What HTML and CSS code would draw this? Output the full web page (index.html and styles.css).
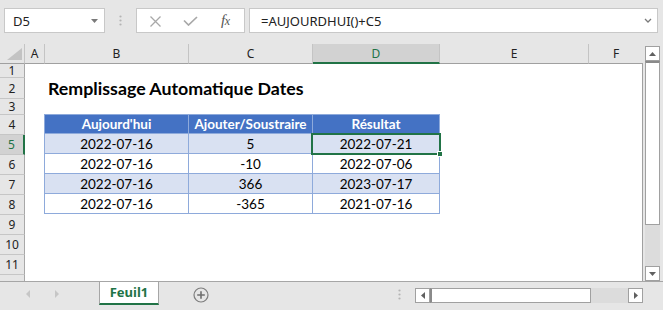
FILE: index.html
```html
<!DOCTYPE html>
<html lang="fr">
<head>
<meta charset="utf-8">
<title>Remplissage Automatique Dates</title>
<link rel="stylesheet" href="styles.css">
</head>
<body>
<div class="app">
  <div class="topbar">
    <div class="namebox">
      <span>D5</span>
      <svg width="7" height="4" viewBox="0 0 7 4"><path d="M0 0H7L3.5 4Z" fill="#7a7a7a"/></svg>
    </div>
    <div class="grip">
      <svg width="3" height="11" viewBox="0 0 3 11"><circle cx="1.5" cy="1.5" r="1.1" fill="#b4b4b4"/><circle cx="1.5" cy="5.5" r="1.1" fill="#b4b4b4"/><circle cx="1.5" cy="9.5" r="1.1" fill="#b4b4b4"/></svg>
    </div>
    <div class="fxbox">
      <svg class="ico-x" width="11" height="11" viewBox="0 0 11 11"><path d="M0.5 0.5L10.5 10.5M10.5 0.5L0.5 10.5" stroke="#a8a8a8" stroke-width="1.3" fill="none"/></svg>
      <svg class="ico-ok" width="15" height="10" viewBox="0 0 15 10"><path d="M1 4.5L5.5 9L14 1" stroke="#a8a8a8" stroke-width="1.7" fill="none"/></svg>
      <span class="fx"><i>f</i><i class="fxx">x</i></span>
    </div>
    <div class="formula">
      <span>=AUJOURDHUI()+C5</span>
      <svg width="8" height="5" viewBox="0 0 8 5"><path d="M1 1L4 4L7 1" stroke="#7a7a7a" stroke-width="1.3" fill="none"/></svg>
    </div>
  </div>

  <div class="main">
    <div class="rowheads">
      <div class="corner"><svg width="15" height="12" viewBox="0 0 15 12"><path d="M15 0V12H0Z" fill="#c3c3c3"/></svg></div>
      <div class="rh r1">1</div>
      <div class="rh r2">2</div>
      <div class="rh r3">3</div>
      <div class="rh">4</div>
      <div class="rh sel">5</div>
      <div class="rh">6</div>
      <div class="rh">7</div>
      <div class="rh">8</div>
      <div class="rh">9</div>
      <div class="rh">10</div>
      <div class="rh">11</div>
      <div class="rh rlast"></div>
    </div>
    <div class="sheetcol">
      <div class="colheads">
        <div class="ch ca">A</div>
        <div class="ch cb">B</div>
        <div class="ch cc">C</div>
        <div class="ch cd sel">D</div>
        <div class="ch ce">E</div>
        <div class="ch cf">F</div>
      </div>
      <div class="canvas">
        <div class="title">Remplissage Automatique Dates</div>
        <div class="table">
          <div class="th">Aujourd'hui</div>
          <div class="th">Ajouter/Soustraire</div>
          <div class="th">Résultat</div>
          <div class="td band">2022-07-16</div>
          <div class="td band">5</div>
          <div class="td band">2022-07-21</div>
          <div class="td">2022-07-16</div>
          <div class="td">-10</div>
          <div class="td">2022-07-06</div>
          <div class="td band">2022-07-16</div>
          <div class="td band">366</div>
          <div class="td band">2023-07-17</div>
          <div class="td">2022-07-16</div>
          <div class="td">-365</div>
          <div class="td">2021-07-16</div>
        </div>
        <div class="selection"><span class="handle"></span></div>
      </div>
    </div>
    <div class="vscroll">
      <div class="sbtn"><svg width="7" height="4" viewBox="0 0 7 4"><path d="M3.5 0L7 4H0Z" fill="#606060"/></svg></div>
      <div class="vthumb"></div>
      <div class="vtrack"></div>
      <div class="sbtn"><svg width="7" height="4" viewBox="0 0 7 4"><path d="M0 0H7L3.5 4Z" fill="#606060"/></svg></div>
    </div>
  </div>

  <div class="tabbar">
    <div class="tabnav">
      <svg width="4" height="8" viewBox="0 0 4 8"><path d="M4 0V8L0 4Z" fill="#c6c6c6"/></svg>
      <svg width="4" height="8" viewBox="0 0 4 8"><path d="M0 0V8L4 4Z" fill="#c6c6c6"/></svg>
    </div>
    <div class="tab">Feuil1</div>
    <div class="addsheet">
      <svg width="16" height="16" viewBox="0 0 16 16"><circle cx="8" cy="8" r="7" stroke="#7d7d7d" stroke-width="1.2" fill="none"/><path d="M8 4.2V11.8M4.2 8H11.8" stroke="#6f6f6f" stroke-width="1.6"/></svg>
    </div>
    <div class="tgrip">
      <svg width="3" height="11" viewBox="0 0 3 11"><circle cx="1.5" cy="1.5" r="1.1" fill="#b4b4b4"/><circle cx="1.5" cy="5.5" r="1.1" fill="#b4b4b4"/><circle cx="1.5" cy="9.5" r="1.1" fill="#b4b4b4"/></svg>
    </div>
    <div class="hscroll">
      <div class="sbtn"><svg width="4" height="7" viewBox="0 0 4 7"><path d="M4 0V7L0 3.5Z" fill="#606060"/></svg></div>
      <div class="hthumb"></div>
      <div class="htrack"></div>
      <div class="sbtn"><svg width="4" height="7" viewBox="0 0 4 7"><path d="M0 0V7L4 3.5Z" fill="#606060"/></svg></div>
    </div>
  </div>
</div>
</body>
</html>
```

FILE: styles.css
```css
* {
  box-sizing: border-box;
  margin: 0;
  padding: 0;
}

html, body {
  width: 663px;
  height: 310px;
  overflow: hidden;
}

body {
  background: #e6e6e6;
  font-family: "Noto Sans", "Open Sans", sans-serif;
  color: #222;
}

.app {
  display: flex;
  flex-direction: column;
  height: 310px;
}

/* ---------- formula bar ---------- */
.topbar {
  height: 44px;
  display: flex;
  align-items: flex-start;
  padding: 8px 0 0 4px;
  flex: none;
}

.namebox,
.fxbox,
.formula {
  height: 25px;
  background: #fff;
  border: 1px solid #c8c8c8;
  display: flex;
  align-items: center;
}

.namebox {
  width: 101px;
  justify-content: space-between;
  padding: 0 6px 0 8px;
  font-size: 13px;
  color: #222;
}

.grip {
  width: 31px;
  height: 25px;
  display: flex;
  align-items: center;
  justify-content: center;
}

.fxbox {
  width: 109px;
  padding-left: 13px;
}

.ico-x {
  margin-top: 1px;
}

.ico-ok {
  margin-left: 22px;
  margin-top: 1px;
}

.fx {
  margin-left: 23px;
  font-family: "Liberation Serif", "DejaVu Serif", serif;
  font-size: 15px;
  color: #555;
  letter-spacing: -0.5px;
}

.fxx {
  font-size: 12px;
}

.formula {
  width: 409px;
  margin-left: 4px;
  justify-content: space-between;
  padding: 0 5px 0 11px;
  font-size: 13px;
  color: #222;
}

/* ---------- grid area ---------- */
.main {
  display: flex;
  height: 237px;
  flex: none;
}

.rowheads {
  width: 25px;
  display: flex;
  flex-direction: column;
  flex: none;
}

.corner {
  height: 20px;
  border-right: 1px solid #c4c4c4;
  border-bottom: 1px solid #a0a0a0;
  display: flex;
  align-items: flex-end;
  justify-content: flex-end;
  padding: 0 2px 3px 0;
}

.rh {
  height: 20px;
  border-right: 1px solid #a8a8a8;
  border-bottom: 1px solid #c6c6c6;
  font-size: 12px;
  line-height: 19px;
  text-align: center;
  color: #222;
}

.rh.r1 { height: 14px; line-height: 13px; }
.rh.r2 { height: 21px; line-height: 21px; }
.rh.r3 { height: 16px; line-height: 15px; }
.rh.rlast { height: 6px; border-bottom: none; }

.rh.sel {
  background: #d2d2d2;
  border-right: 2px solid #217346;
  color: #217346;
}

.sheetcol {
  width: 618px;
  display: flex;
  flex-direction: column;
  flex: none;
}

.colheads {
  height: 20px;
  display: flex;
  flex: none;
}

.ch {
  height: 20px;
  border-right: 1px solid #c4c4c4;
  border-bottom: 1px solid #a0a0a0;
  font-size: 12px;
  line-height: 19px;
  text-align: center;
  color: #222;
  flex: none;
}

.ca { width: 20px; }
.cb { width: 144px; }
.cc { width: 124px; }
.cd { width: 127px; }
.ce { width: 149px; }
.cf { width: 54px; border-right: none; }

.ch.sel {
  background: #d2d2d2;
  border-bottom: 2px solid #217346;
  color: #217346;
}

.canvas {
  flex: 1;
  background: #fff;
  border-right: 1px solid #a0a0a0;
  display: grid;
  grid-template-columns: 20px 144px 124px 127px 149px 54px;
  grid-template-rows: 14px 21px 16px repeat(8, 20px) 6px;
}

.title {
  grid-column: 2 / 6;
  grid-row: 2;
  font-family: "Lato", "Noto Sans", sans-serif;
  font-weight: 700;
  font-size: 17.8px;
  line-height: 21px;
  padding-left: 3px;
  color: #000;
  white-space: nowrap;
}

.table {
  grid-column: 2 / 5;
  grid-row: 4 / 9;
  margin: -1px 0 0 -1px;
  display: grid;
  grid-template-columns: 145px 124px 127px;
  grid-template-rows: repeat(5, 20px);
  font-family: "Lato", "Noto Sans", sans-serif;
  font-size: 13.5px;
}

.th,
.td {
  border-right: 1px solid #8eaadb;
  border-bottom: 1px solid #8eaadb;
  text-align: center;
  line-height: 20px;
  color: #000;
  white-space: nowrap;
}

.th {
  background: #4472c4;
  color: #fff;
  font-weight: 700;
  border-top: 1px solid #8eaadb;
  line-height: 18px;
}

.th:first-child,
.td:nth-child(3n + 1) {
  border-left: 1px solid #8eaadb;
}

.td.band {
  background: #d9e1f2;
}

.selection {
  grid-column: 4;
  grid-row: 5;
  margin: -2px -1px 0 -2px;
  border: 2px solid #217346;
  position: relative;
}

.handle {
  position: absolute;
  right: -4px;
  bottom: -4px;
  width: 6px;
  height: 6px;
  background: #217346;
  border: 1px solid #fff;
}

/* ---------- vertical scrollbar ---------- */
.vscroll {
  width: 15px;
  height: 235px;
  margin: 2px 0 0 2px;
  display: flex;
  flex-direction: column;
  flex: none;
  background: #dcdcdc;
}

.sbtn {
  width: 15px;
  height: 15px;
  border: 1px solid #a0a0a0;
  background: #fff;
  display: flex;
  align-items: center;
  justify-content: center;
  flex: none;
}

.vthumb {
  height: 164px;
  background: #fff;
  border: 1px solid #a0a0a0;
  border-top: 2px solid #8a8a8a;
  flex: none;
}

.vtrack {
  flex: 1;
}

/* ---------- sheet tabs ---------- */
.tabbar {
  flex: 1;
  border-top: 1px solid #a6a6a6;
  display: flex;
  align-items: flex-start;
}

.tabnav {
  width: 99px;
  height: 23px;
  display: flex;
  align-items: center;
  padding-left: 26px;
  gap: 25px;
}

.tab {
  width: 60px;
  height: 23px;
  background: #fff;
  border-left: 1px solid #a6a6a6;
  border-right: 1px solid #a6a6a6;
  border-bottom: 2px solid #217346;
  font-family: "Noto Sans", sans-serif;
  font-weight: 700;
  font-size: 13px;
  line-height: 20px;
  text-align: center;
  color: #217346;
}

.addsheet {
  margin: 5px 0 0 34px;
  width: 16px;
  height: 16px;
  display: flex;
}

.tgrip {
  margin: 7px 0 0 182px;
  width: 16px;
  display: flex;
  justify-content: center;
}

.hscroll {
  margin: 6px 0 0 8px;
  width: 228px;
  height: 15px;
  display: flex;
  background: #dcdcdc;
}

.hthumb {
  width: 161px;
  background: #fff;
  border: 1px solid #a0a0a0;
  border-left: 2px solid #8a8a8a;
}

.htrack {
  flex: 1;
}
```
